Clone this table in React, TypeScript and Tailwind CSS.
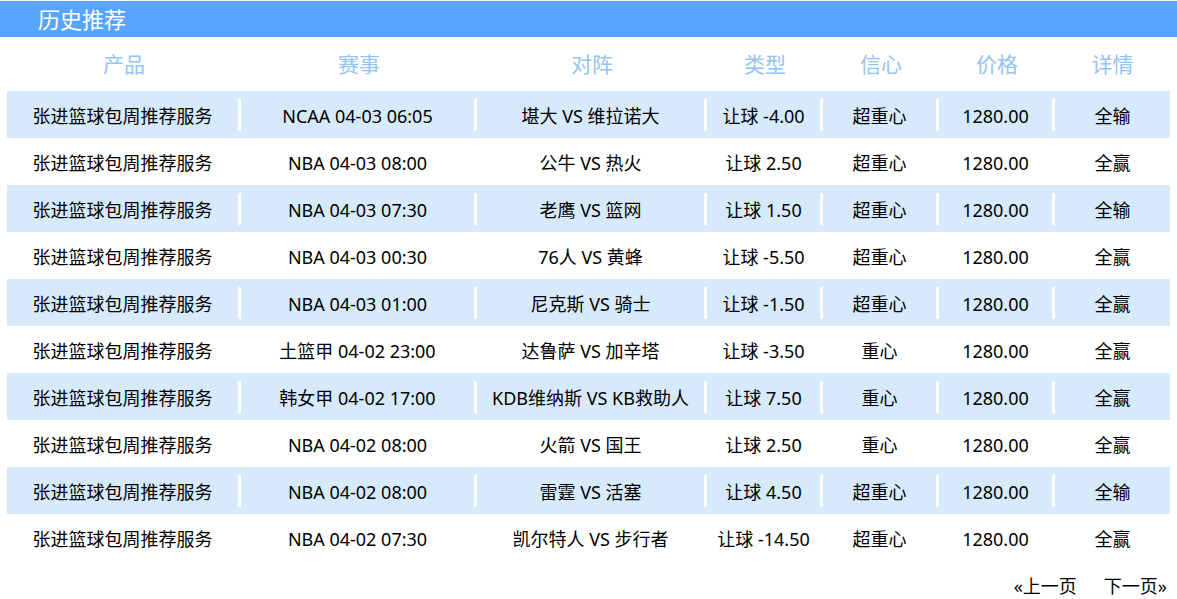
const rows = [
  ['NCAA 04-03 06:05', '堪大 VS 维拉诺大', '让球 -4.00', '超重心', '全输'],
  ['NBA 04-03 08:00', '公牛 VS 热火', '让球 2.50', '超重心', '全赢'],
  ['NBA 04-03 07:30', '老鹰 VS 篮网', '让球 1.50', '超重心', '全输'],
  ['NBA 04-03 00:30', '76人 VS 黄蜂', '让球 -5.50', '超重心', '全赢'],
  ['NBA 04-03 01:00', '尼克斯 VS 骑士', '让球 -1.50', '超重心', '全赢'],
  ['土篮甲 04-02 23:00', '达鲁萨 VS 加辛塔', '让球 -3.50', '重心', '全赢'],
  ['韩女甲 04-02 17:00', 'KDB维纳斯 VS KB救助人', '让球 7.50', '重心', '全赢'],
  ['NBA 04-02 08:00', '火箭 VS 国王', '让球 2.50', '重心', '全赢'],
  ['NBA 04-02 08:00', '雷霆 VS 活塞', '让球 4.50', '超重心', '全输'],
  ['NBA 04-02 07:30', '凯尔特人 VS 步行者', '让球 -14.50', '超重心', '全赢'],
]

const widths = ['w-[234px]', 'w-[236px]', 'w-[230px]', 'w-[116px]', 'w-[116px]', 'w-[116px]', 'w-[115px]']
const heads = ['产品', '赛事', '对阵', '类型', '信心', '价格', '详情']

export default function App() {
  return (
    <div className="w-[1177px] h-[599px] bg-white pt-px overflow-hidden" style={{ fontFamily: '"Noto Sans", "Noto Sans CJK SC", sans-serif' }}>
      <div className="h-9 bg-[#57a5ff] flex items-center pl-[38px]">
        <h1 className="text-[22px] text-white leading-none">历史推荐</h1>
      </div>
      <div className="px-[7px]">
        <div className="flex h-[54px] items-center pt-px">
          {heads.map((h, i) => (
            <div key={h} className={`${widths[i]} text-center text-[21px] text-[#93c4f2]`}>{h}</div>
          ))}
        </div>
        {rows.map((r, idx) => {
          const cells = ['张进篮球包周推荐服务', r[0], r[1], r[2], r[3], '1280.00', r[4]]
          return (
            <div key={idx} className={`flex h-[47px] items-center ${idx % 2 === 0 ? 'bg-[#d6eafc]' : 'bg-white'}`}>
              {cells.map((c, i) => (
                <div key={i} className={`${widths[i]} h-8 pt-[3px] flex items-center justify-center text-[18px] text-black whitespace-nowrap ${i < 6 ? 'border-r-[3px] border-white' : ''}`}>{c}</div>
              ))}
            </div>
          )
        })}
        <div className="flex justify-end gap-[27px] pt-[12px] text-[18px] text-black pr-[3px]">
          <span>«上一页</span>
          <span>下一页»</span>
        </div>
      </div>
    </div>
  )
}
